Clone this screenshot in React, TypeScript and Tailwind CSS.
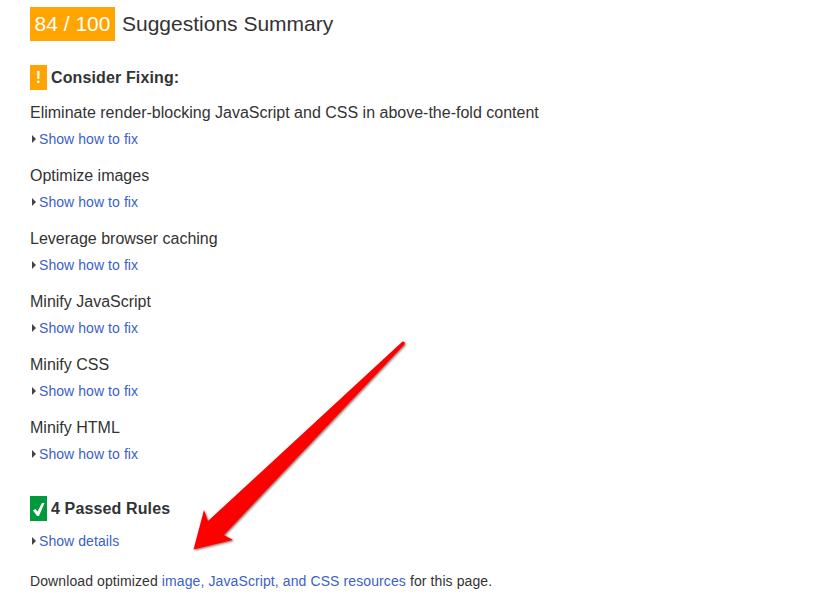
const rules = [
  "Eliminate render-blocking JavaScript and CSS in above-the-fold content",
  "Optimize images",
  "Leverage browser caching",
  "Minify JavaScript",
  "Minify CSS",
  "Minify HTML",
];

function ToggleLink({ label }: { label: string }) {
  return (
    <div className="flex h-[18px] items-center text-[14px] leading-[18px] tracking-[0.07px] text-[#3b5fc7]">
      <span className="ml-[2px] mr-[3px] h-0 w-0 border-y-[4px] border-l-[4px] border-y-transparent border-l-[#444]" />
      <a>{label}</a>
    </div>
  );
}

function RedArrow() {
  return (
    <svg className="absolute left-0 top-0" width="819" height="596" viewBox="0 0 819 596">
      <defs>
        <filter id="arrowShadow" x="-10%" y="-10%" width="120%" height="120%">
          <feDropShadow dx="1" dy="1" stdDeviation="0.8" floodColor="#000" floodOpacity="0.55" />
        </filter>
      </defs>
      <path
        d="M193.5 549.5 L204 510 L208 521 L402.5 341.5 Q405.5 341 404.5 344.5 L224 535 L233 540 Z"
        fill="#ff0000"
        filter="url(#arrowShadow)"
      />
    </svg>
  );
}

export default function App() {
  return (
    <div className="relative h-[596px] w-[819px] overflow-hidden bg-white pl-[30px] pt-[7px] font-['Liberation_Sans',Arial,sans-serif] text-[#333]">
      <div className="flex items-center">
        <span className="flex h-[34px] w-[85px] items-center justify-center bg-[#ffa400] text-[21px] text-white">84 / 100</span>
        <h2 className="ml-[7px] text-[21px]">Suggestions Summary</h2>
      </div>

      <div className="mt-[24px] flex items-center">
        <span className="flex h-[25px] w-[17px] items-center justify-center bg-[#ffa400] text-[16px] font-bold text-white">!</span>
        <h3 className="ml-[4px] text-[16px] font-bold tracking-[0.13px]">Consider Fixing:</h3>
      </div>

      <div className="mt-[9px] flex flex-col">
        {rules.map((rule) => (
          <div key={rule} className="h-[63px] pt-[3px]">
            <p className="h-[22px] text-[16px] leading-[22px]">{rule}</p>
            <div className="mt-[6px]">
              <ToggleLink label="Show how to fix" />
            </div>
          </div>
        ))}
      </div>

      <div className="mt-[19px] flex items-center">
        <span className="flex h-[25px] w-[17px] items-center justify-center bg-[#009a3d]">
          <svg width="15" height="19" viewBox="0 0 15 19">
            <path d="M2 11.5 L4.5 10 L6.5 12.5 L11 4 L13.5 4 L8 17 L6 17 Z" fill="#fff" />
          </svg>
        </span>
        <h3 className="ml-[4px] text-[16px] font-bold tracking-[0.13px]">4 Passed Rules</h3>
      </div>

      <div className="mt-[11px]">
        <ToggleLink label="Show details" />
      </div>

      <p className="mt-[22px] text-[14px] leading-[18px] tracking-[0.1px]">
        Download optimized <a className="text-[#3b5fc7]">image, JavaScript, and CSS resources</a> for this page.
      </p>

      <RedArrow />
    </div>
  );
}
